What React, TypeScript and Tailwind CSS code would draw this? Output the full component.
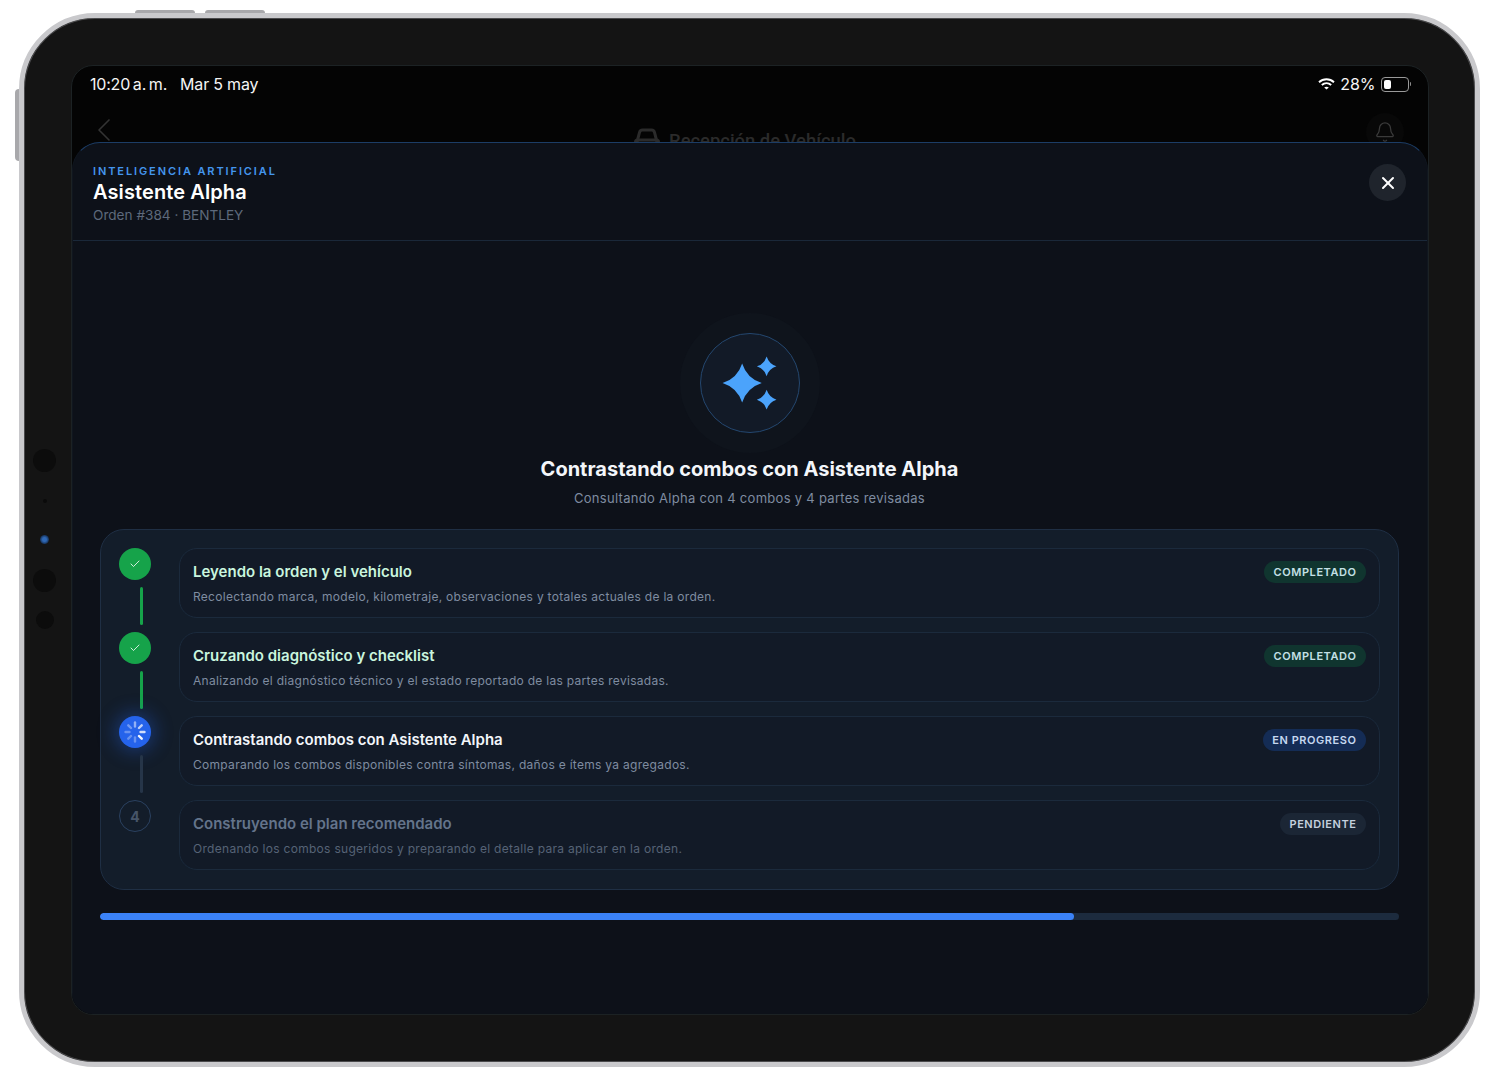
import { Bell, Check, ChevronLeft, X } from "lucide-react";

type StepStatus = "done" | "active" | "pending";

interface Step {
  title: string;
  description: string;
  status: StepStatus;
}

const steps: Step[] = [
  {
    title: "Leyendo la orden y el vehículo",
    description: "Recolectando marca, modelo, kilometraje, observaciones y totales actuales de la orden.",
    status: "done",
  },
  {
    title: "Cruzando diagnóstico y checklist",
    description: "Analizando el diagnóstico técnico y el estado reportado de las partes revisadas.",
    status: "done",
  },
  {
    title: "Contrastando combos con Asistente Alpha",
    description: "Comparando los combos disponibles contra síntomas, daños e ítems ya agregados.",
    status: "active",
  },
  {
    title: "Construyendo el plan recomendado",
    description: "Ordenando los combos sugeridos y preparando el detalle para aplicar en la orden.",
    status: "pending",
  },
];

const titleColor: Record<StepStatus, string> = {
  done: "text-[#c9f5de]",
  active: "text-[#f3f6fa]",
  pending: "text-[#64748b]",
};

const descColor: Record<StepStatus, string> = {
  done: "text-[#7f8ca0]",
  active: "text-[#7f8ca0]",
  pending: "text-[#566376]",
};

const badgeStyle: Record<StepStatus, string> = {
  done: "bg-[#10352f] text-[#c4e0e6]",
  active: "bg-[#142c55] text-[#c6d8f0]",
  pending: "bg-[#1b2635] text-[#c5d0de]",
};

const badgeLabel: Record<StepStatus, string> = {
  done: "COMPLETADO",
  active: "EN PROGRESO",
  pending: "PENDIENTE",
};

const star = (x: number, y: number, r: number) => {
  const k = r * 0.24;
  return `M${x} ${y - r}Q${x + k} ${y - k} ${x + r} ${y}Q${x + k} ${y + k} ${x} ${y + r}Q${x - k} ${y + k} ${x - r} ${y}Q${x - k} ${y - k} ${x} ${y - r}Z`;
};

const Sparkles = () => (
  <svg width="100" height="100" viewBox="0 0 100 100" fill="#4ba3fb">
    <path d={star(42, 50, 20)} />
    <path d={star(67, 33, 10)} />
    <path d={star(67, 67, 10)} />
  </svg>
);

const Spinner = () => (
  <svg width="22" height="22" viewBox="0 0 22 22" stroke="#ffffff" strokeWidth="2.4" strokeLinecap="round">
    <path d="M11 1.5V5.5" opacity="0.5" />
    <path d="M17.7 4.3L15 7" opacity="0.7" />
    <path d="M20.5 11H16.5" opacity="0.8" />
    <path d="M17.7 17.7L15 15" opacity="0.95" />
    <path d="M11 20.5V16.5" opacity="0.3" />
    <path d="M4.3 17.7L7 15" opacity="0.3" />
    <path d="M1.5 11H5.5" opacity="0.3" />
    <path d="M4.3 4.3L7 7" opacity="0.35" />
  </svg>
);

const Wifi = () => (
  <svg width="17" height="12" viewBox="0 0 17 12" fill="none" stroke="#ffffff" strokeWidth="1.9">
    <path d="M1 4.2C5.2 0.3 11.8 0.3 16 4.2" />
    <path d="M3.8 7C6.5 4.6 10.5 4.6 13.2 7" />
    <path d="M8.5 11.6L6.2 9.4C7.5 8.4 9.5 8.4 10.8 9.4Z" fill="#ffffff" stroke="none" />
  </svg>
);

const CarFront = () => (
  <svg width="26" height="26" viewBox="0 0 26 26" fill="none" stroke="#2b2b2b" strokeWidth="3">
    <path d="M3 14L5.5 4.5Q6 2 8.5 2H17.5Q20 2 20.5 4.5L23 14" />
    <rect x="1.5" y="12" width="23" height="9" rx="2" />
  </svg>
);

const StepMarker = ({ status, index, last }: { status: StepStatus; index: number; last: boolean }) => (
  <div className="w-[60px] shrink-0 flex flex-col">
    {status === "done" && (
      <div className="w-8 h-8 shrink-0 rounded-full bg-[#16a34a] flex items-center justify-center">
        <Check size={12} strokeWidth={1.6} className="text-white" />
      </div>
    )}
    {status === "active" && (
      <div className="w-8 h-8 shrink-0 rounded-full bg-[#2563eb] flex items-center justify-center shadow-[0_0_18px_4px_rgba(37,99,235,0.35)]">
        <Spinner />
      </div>
    )}
    {status === "pending" && (
      <div className="w-8 h-8 shrink-0 rounded-full border border-[#2a4160] flex items-center justify-center text-[14px] font-bold text-[#475569]">
        {index + 1}
      </div>
    )}
    {!last && (
      <div
        className={`w-[3px] h-[38px] shrink-0 mt-[7px] ml-[21px] rounded-full ${
          status === "done" ? "bg-[#16a34a]" : "bg-[#263548]"
        }`}
      />
    )}
  </div>
);

const StepRow = ({ step, index }: { step: Step; index: number }) => (
  <div className="flex h-[70px]">
    <StepMarker status={step.status} index={index} last={index === steps.length - 1} />
    <div className="flex-1 h-[70px] rounded-[18px] border border-[#1b2a3c] bg-[#121a27] pl-[13px] pr-[13px] pt-[12px]">
      <div className="flex items-start justify-between">
        <span className={`text-[15px] leading-[21px] font-semibold ${titleColor[step.status]}`}>
          {step.title}
        </span>
        <span
          className={`h-[22px] px-[9.5px] rounded-full text-[11px] leading-[22px] font-semibold tracking-[0.55px] ${badgeStyle[step.status]}`}
        >
          {badgeLabel[step.status]}
        </span>
      </div>
      <p className={`mt-[5px] text-[12px] leading-[18px] tracking-[0.29px] ${descColor[step.status]}`}>
        {step.description}
      </p>
    </div>
  </div>
);

export default function App() {
  return (
    <div className="w-[1495px] h-[1080px] bg-white pl-[19px] pt-[13px] font-['Inter',sans-serif] overflow-hidden">
      <div className="relative w-[1461px] h-[1054px] rounded-[76px] bg-[#141414] border-[5px] border-[#c9c9cc] shadow-[inset_0_0_0_1px_#4a4a4c] p-[47px]">
        {/* hardware buttons */}
        <div className="absolute left-[111px] -top-[8px] w-[60px] h-[3px] bg-[#a8a8ab] rounded-t-sm" />
        <div className="absolute left-[181px] -top-[8px] w-[60px] h-[3px] bg-[#a8a8ab] rounded-t-sm" />
        <div className="absolute -left-[9px] top-[71px] w-[4px] h-[72px] bg-[#a8a8ab] rounded-l-sm" />

        {/* cameras and sensors */}
        <div className="absolute left-[9px] top-[431px] w-[23px] h-[23px] rounded-full bg-[#0c0c0c]" />
        <div className="absolute left-[19px] top-[481px] w-[4px] h-[4px] rounded-full bg-[#0a0a0a]" />
        <div className="absolute left-[16px] top-[517px] w-[9px] h-[9px] rounded-full bg-[radial-gradient(circle,#2f68b5_30%,#10233f_80%)]" />
        <div className="absolute left-[9px] top-[551px] w-[23px] h-[23px] rounded-full bg-[#0c0c0c]" />
        <div className="absolute left-[12px] top-[593px] w-[18px] h-[18px] rounded-full bg-[#0c0c0c]" />

        {/* screen */}
        <div className="relative w-[1358px] h-[950px] rounded-[22px] border border-[#1c2224] bg-[#040404] overflow-hidden">
          <div className="h-[38px] pl-[18px] pr-[17px] pb-[2px] flex items-center justify-between text-[16px] text-[#f5f5f5]">
            <div className="flex gap-[13px] tracking-[-0.2px]">
              <span className="[word-spacing:-1.5px]">10:20 a. m.</span>
              <span>Mar 5 may</span>
            </div>
            <div className="flex items-center gap-[5px]">
              <Wifi />
              <span>28%</span>
              <div className="flex items-center">
                <div className="w-[28px] h-[15px] rounded-[4px] border border-[#9a9a9a] p-[2px]">
                  <div className="w-[7px] h-full rounded-[2px] bg-white" />
                </div>
                <div className="w-[1.5px] h-[4px] ml-[1px] bg-[#8a8a8a] rounded-r-sm" />
              </div>
            </div>
          </div>
          <div className="h-[60px] pl-[12px] pr-[31px] pt-[6px] flex items-start justify-between text-[#2b2b2b]">
            <ChevronLeft size={40} strokeWidth={1} className="text-[#333]" />
            <div className="flex items-center gap-[9px] pt-[17px]">
              <CarFront />
              <span className="text-[18.4px] font-medium font-['Roboto',sans-serif]">Recepción de Vehículo</span>
            </div>
            <div className="w-[38px] h-[38px] -mr-[7px] mt-[3px] rounded-full bg-[#080808] flex items-center justify-center">
              <Bell size={22} strokeWidth={1.4} className="text-[#3a3a3a]" />
            </div>
          </div>

          {/* modal sheet */}
          <div className="absolute inset-x-0 top-[76px] bottom-0 rounded-t-[28px] border-t border-x border-t-[#1c3d66] border-x-[#10161f] bg-[#0d1119]">
            <div className="relative h-[98px] border-b border-[#1a2839] pl-[20px] pt-[21px]">
              <div className="text-[11px] leading-[14px] font-semibold tracking-[1.9px] text-[#4496ee]">
                INTELIGENCIA ARTIFICIAL
              </div>
              <div className="text-[20px] leading-[28px] font-semibold tracking-[0.1px] text-white">Asistente Alpha</div>
              <div className="text-[13.6px] leading-[18px] text-[#5d697b]">Orden #384 · BENTLEY</div>
              <button className="absolute right-[21px] top-[21px] w-[37px] h-[37px] rounded-full bg-[#1f242c] flex items-center justify-center text-white">
                <X size={20} strokeWidth={2.4} />
              </button>
            </div>

            <div className="pl-[27px] pr-[28px]">
              <div className="flex justify-center pt-[72px]">
                <div className="w-[140px] h-[140px] rounded-full bg-[#0f141c] flex items-center justify-center">
                  <div className="w-[100px] h-[100px] rounded-full bg-[#121a27] border border-[#24476f] flex items-center justify-center">
                    <Sparkles />
                  </div>
                </div>
              </div>
              <h2 className="mt-[2px] text-center text-[20px] leading-[28px] font-bold text-[#f3f6fa]">
                Contrastando combos con Asistente Alpha
              </h2>
              <p className="mt-[5px] text-center text-[13px] leading-[20px] tracking-[0.29px] text-[#7f8ca0]">
                Consultando Alpha con 4 combos y 4 partes revisadas
              </p>

              <div className="mt-[21px] h-[361px] rounded-[24px] border border-[#1f2f44] bg-[#131d2a] pl-[18px] pr-[18px] pt-[18px] flex flex-col gap-[14px]">
                {steps.map((step, i) => (
                  <StepRow key={step.title} step={step} index={i} />
                ))}
              </div>

              <div className="mt-[23px] h-[7px] rounded-full bg-[#1c2b3e] overflow-hidden">
                <div className="w-3/4 h-full rounded-full bg-[#3b82f6]" />
              </div>
            </div>
          </div>
        </div>
      </div>
    </div>
  );
}
